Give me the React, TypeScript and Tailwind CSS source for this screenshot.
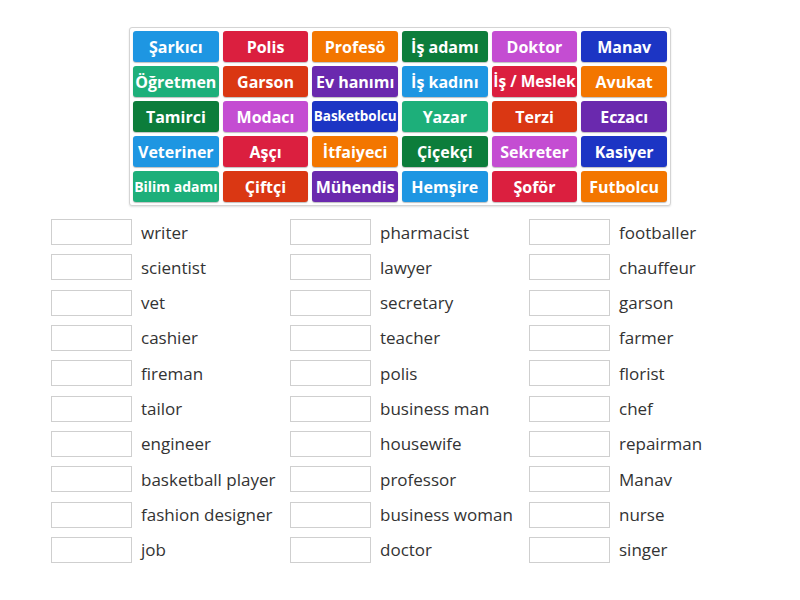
const BLUE = "bg-[#1e96e2]";
const RED = "bg-[#db1f3f]";
const ORANGE = "bg-[#f37600]";
const DKGREEN = "bg-[#0c7d3b]";
const PINK = "bg-[#c44dd2]";
const DKBLUE = "bg-[#1c35c4]";
const TEAL = "bg-[#1daf7a]";
const REDORANGE = "bg-[#da3713]";
const PURPLE = "bg-[#6a29ae]";

const palette = [BLUE, RED, ORANGE, DKGREEN, PINK, DKBLUE, TEAL, REDORANGE, PURPLE];

// label + font size class (long words are shrunk to fit the tile)
const tiles: { label: string; size?: string }[] = [
  { label: "Şarkıcı" },
  { label: "Polis" },
  { label: "Profesö" },
  { label: "İş adamı" },
  { label: "Doktor" },
  { label: "Manav" },
  { label: "Öğretmen" },
  { label: "Garson" },
  { label: "Ev hanımı" },
  { label: "İş kadını" },
  { label: "İş / Meslek", size: "text-[15.5px]" },
  { label: "Avukat" },
  { label: "Tamirci" },
  { label: "Modacı" },
  { label: "Basketbolcu", size: "text-[13.5px]" },
  { label: "Yazar" },
  { label: "Terzi" },
  { label: "Eczacı" },
  { label: "Veteriner" },
  { label: "Aşçı" },
  { label: "İtfaiyeci" },
  { label: "Çiçekçi" },
  { label: "Sekreter" },
  { label: "Kasiyer" },
  { label: "Bilim adamı", size: "text-[14px]" },
  { label: "Çiftçi" },
  { label: "Mühendis" },
  { label: "Hemşire" },
  { label: "Şoför" },
  { label: "Futbolcu" },
];

const columns = [
  ["writer", "scientist", "vet", "cashier", "fireman", "tailor", "engineer", "basketball player", "fashion designer", "job"],
  ["pharmacist", "lawyer", "secretary", "teacher", "polis", "business man", "housewife", "professor", "business woman", "doctor"],
  ["footballer", "chauffeur", "garson", "farmer", "florist", "chef", "repairman", "Manav", "nurse", "singer"],
];

function Tile({ label, size, color }: { label: string; size?: string; color: string }) {
  return (
    <div
      className={`${color} h-[31px] rounded-[3px] flex items-center justify-center text-white font-bold whitespace-nowrap overflow-hidden shadow-[0_1px_1px_rgba(0,0,0,0.25)] ${size ?? "text-[16px]"}`}
    >
      <span className="leading-none">{label}</span>
    </div>
  );
}

export default function App() {
  return (
    <div className="w-[800px] h-[600px] bg-white font-['Open_Sans',sans-serif] overflow-hidden">
      <div className="pt-[27px] flex justify-center">
        <div className="w-[542px] border border-[#d4d4d4] rounded-[3px] p-[3px] shadow-[0_1px_2px_rgba(0,0,0,0.12)] bg-white">
          <div className="grid grid-cols-6 gap-x-[4px] gap-y-[4px]">
            {tiles.map((t, i) => (
              <Tile key={t.label} label={t.label} size={t.size} color={palette[i % palette.length]} />
            ))}
          </div>
        </div>
      </div>

      <div className="mt-[13px] ml-[51px] flex">
        {columns.map((col, ci) => (
          <div key={ci} className="w-[239px] flex flex-col gap-y-[9.33px]">
            {col.map((word) => (
              <div key={word} className="flex items-center h-[26px]">
                <div className="w-[81px] h-[26px] border border-[#cfcfcf] bg-white shrink-0" />
                <span className="ml-[9px] text-[17px] text-[#333333] whitespace-nowrap leading-none">
                  {word}
                </span>
              </div>
            ))}
          </div>
        ))}
      </div>
    </div>
  );
}
